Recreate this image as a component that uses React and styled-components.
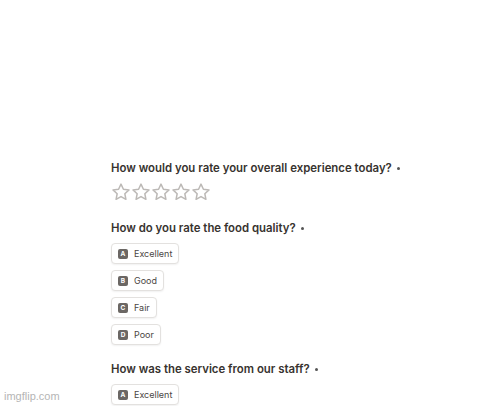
import React from "react";
import styled, { createGlobalStyle } from "styled-components";

const Global = createGlobalStyle`
  html, body { margin: 0; padding: 0; background: #fff; }
  body { font-family: Inter, "Noto Sans", sans-serif; }
`;

const Page = styled.div`
  width: 500px;
  height: 406px;
  position: relative;
  overflow: hidden;
  background: #fff;
`;

const Form = styled.div`
  display: flex;
  flex-direction: column;
  padding: 161px 0 0 111px;
`;

const Question = styled.div`
  display: flex;
  flex-direction: column;
  gap: ${(p) => p.$gap || 7}px;
  margin-bottom: ${(p) => p.$mb || 0}px;
`;

const Title = styled.div`
  display: flex;
  align-items: center;
  gap: 5px;
  font-size: 11.4px;
  font-weight: 600;
  color: #37332f;
  line-height: 15px;
`;

const Req = styled.span`
  width: 3px;
  height: 3px;
  border-radius: 50%;
  background: #555;
`;

const Stars = styled.div`
  display: flex;
  padding-top: 1px;
`;

const Options = styled.div`
  display: flex;
  flex-direction: column;
  align-items: flex-start;
  gap: 6px;
`;

const Option = styled.div`
  display: flex;
  align-items: center;
  gap: 6px;
  height: 21px;
  box-sizing: border-box;
  padding: 0 6px;
  border: 1px solid #e3e1df;
  border-radius: 4px;
  box-shadow: 0 1px 2px rgba(0, 0, 0, 0.06);
  font-size: 9px;
  color: #4a4643;
  background: #fff;
`;

const Key = styled.span`
  width: 10px;
  height: 10px;
  border-radius: 2px;
  background: #6b6764;
  color: #fff;
  font-size: 6.5px;
  font-weight: 700;
  display: flex;
  align-items: center;
  justify-content: center;
`;

const Watermark = styled.div`
  position: absolute;
  left: 4px;
  bottom: 4px;
  font-family: "Liberation Sans", Arial, sans-serif;
  font-size: 11px;
  color: #b5b5b5;
`;

const Star = () => (
  <svg width="20" height="20" viewBox="0 0 24 24" fill="none" stroke="#bcb9b6" strokeWidth="1.8" strokeLinejoin="round">
    <path d="M12 2.5l2.9 6.2 6.7.8-5 4.6 1.3 6.7L12 17.5l-5.9 3.3 1.3-6.7-5-4.6 6.7-.8z" />
  </svg>
);

const OptionList = ({ items }) => (
  <Options>
    {items.map((t, i) => (
      <Option key={t}>
        <Key>{String.fromCharCode(65 + i)}</Key>
        {t}
      </Option>
    ))}
  </Options>
);

export default function App() {
  return (
    <Page>
      <Global />
      <Form>
        <Question $gap={5} $mb={19}>
          <Title>How would you rate your overall experience today?<Req /></Title>
          <Stars>
            {[0, 1, 2, 3, 4].map((i) => <Star key={i} />)}
          </Stars>
        </Question>
        <Question $mb={17}>
          <Title>How do you rate the food quality?<Req /></Title>
          <OptionList items={["Excellent", "Good", "Fair", "Poor"]} />
        </Question>
        <Question>
          <Title>How was the service from our staff?<Req /></Title>
          <OptionList items={["Excellent"]} />
        </Question>
      </Form>
      <Watermark>imgflip.com</Watermark>
    </Page>
  );
}
